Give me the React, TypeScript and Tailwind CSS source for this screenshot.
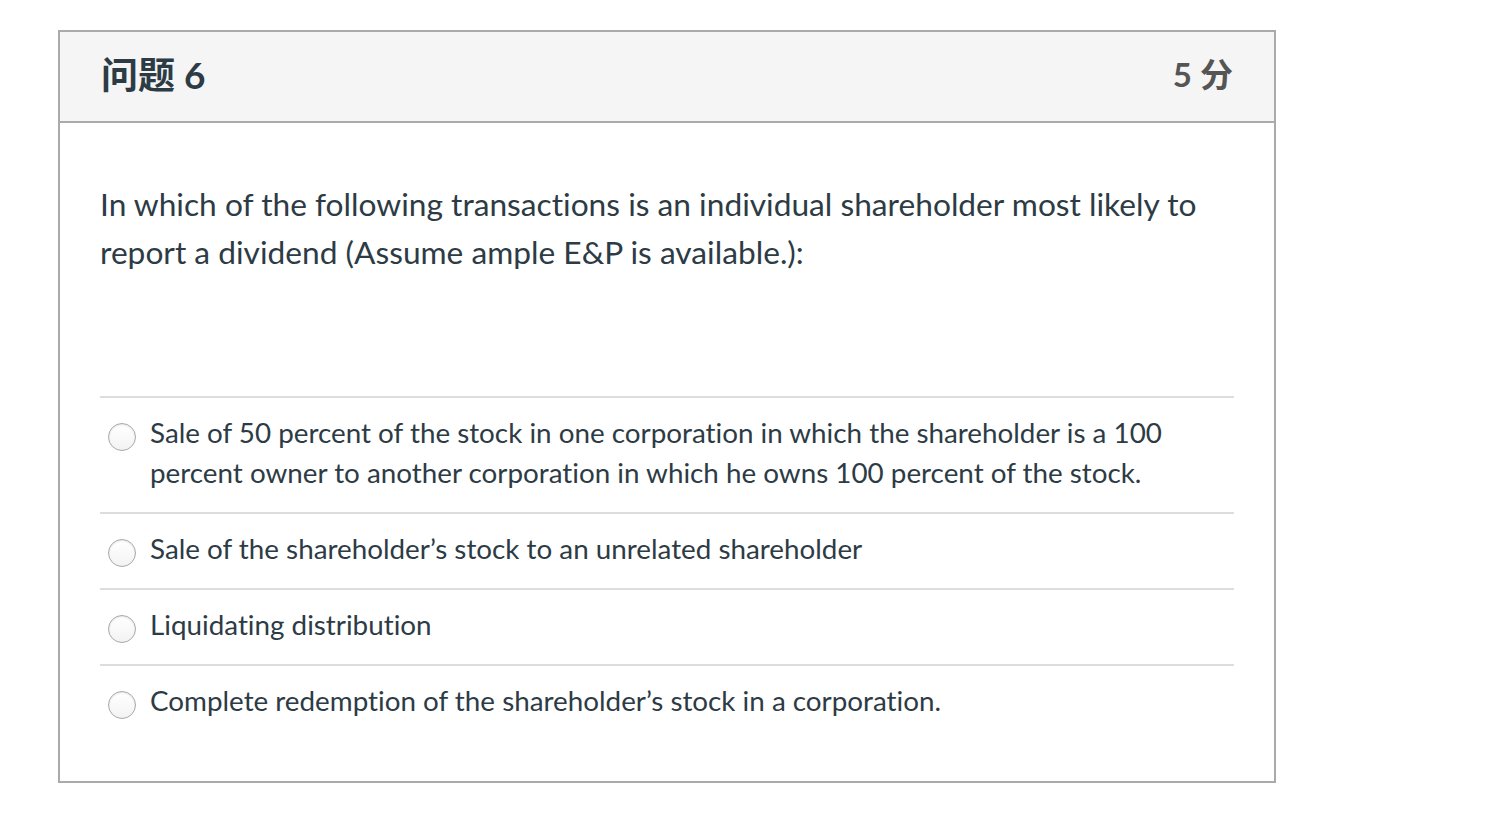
import React from 'react';

const answers = [
  'Sale of 50 percent of the stock in one corporation in which the shareholder is a 100 percent owner to another corporation in which he owns 100 percent of the stock.',
  'Sale of the shareholder\u2019s stock to an unrelated shareholder',
  'Liquidating distribution',
  'Complete redemption of the shareholder\u2019s stock in a corporation.',
];

const Radio: React.FC = () => (
  <span className="mt-[10px] block h-[28px] w-[28px] shrink-0 rounded-full border-[1.5px] border-[#a9a9a9] bg-gradient-to-b from-white to-[#f3f3f3] shadow-[inset_0_1px_2px_rgba(0,0,0,0.1)]" />
);

const App: React.FC = () => {
  return (
    <div
      className="min-h-screen bg-white pt-[30px] pl-[58px] [font-variant-ligatures:none]"
      style={{ fontFamily: 'Lato, "Noto Sans CJK SC", sans-serif' }}
    >
      <div className="w-[1218px] border-2 border-[#aaaaaa]">
        {/* Header */}
        <div className="flex h-[91px] items-center justify-between border-b-2 border-[#aaaaaa] bg-[#f5f5f5] px-[41px] pb-[3px]">
          <h2 className="text-[37px] font-bold text-[#2d3b45]">问题 6</h2>
          <span className="text-[33px] font-bold text-[#555555]">5 分</span>
        </div>

        {/* Body */}
        <div className="px-[40px] pt-[57px] pb-[41px]">
          <p className="text-[31.7px] leading-[48px] text-[#2d3b45]">
            In which of the following transactions is an individual shareholder most likely to report a dividend (Assume ample E&amp;P is available.):
          </p>
          <div className="mt-[120px]">
            {answers.map((a) => (
              <div key={a} className="flex gap-[14px] border-t-2 border-[#dddddd] pt-[15px] pb-[19px] pl-[8px]">
                <Radio />
                <span className="text-[27.8px] leading-[40px] text-[#2d3b45]">{a}</span>
              </div>
            ))}
          </div>
        </div>
      </div>
    </div>
  );
};

export default App;
